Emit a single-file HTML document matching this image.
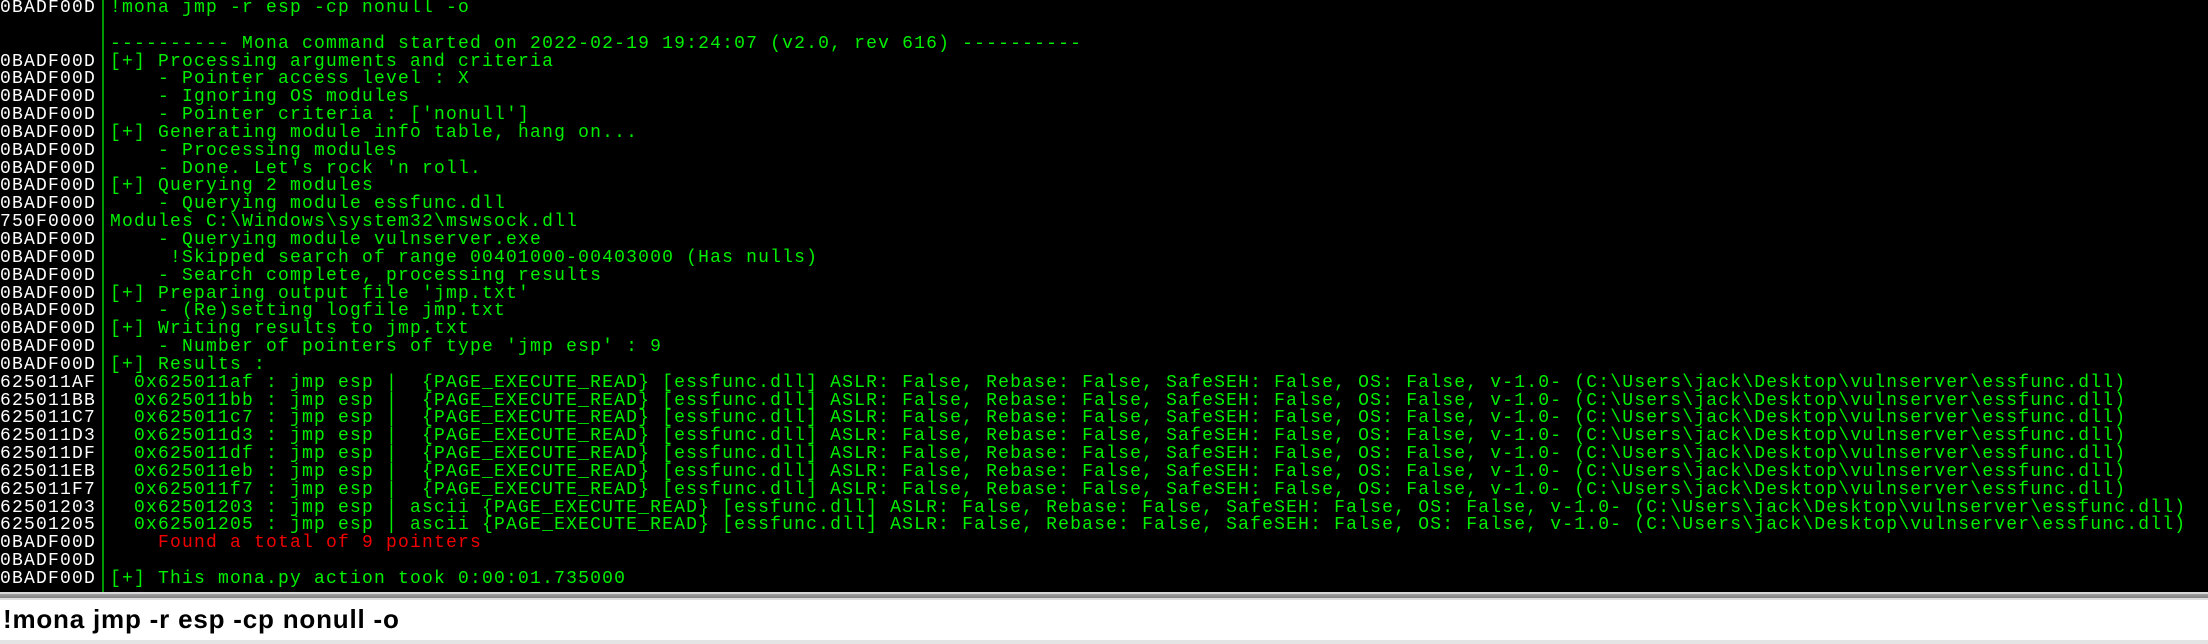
<!DOCTYPE html>
<html><head><meta charset="utf-8"><style>
html,body{margin:0;padding:0;width:2208px;height:644px;overflow:hidden;background:#000}
.log{position:absolute;left:0;top:0;width:2208px;height:592px;background:#000}
.div{position:absolute;left:102px;top:0;width:2px;height:592px;background:#009a00}
pre{margin:0;position:absolute;top:0;font-family:"Liberation Mono",monospace;font-size:18px;letter-spacing:1.2px;line-height:17.85px;white-space:pre}
.addr{left:0;color:#fff}
.txt{left:110px;color:#00f000}
.r{color:#f00000}
.bar{position:absolute;left:0;top:592px;width:2208px;height:8px;background:linear-gradient(#d8d8d8,#d8d8d8 2px,#a0a0a0 2px,#808080 6px,#e0e0e0 6px)}
.inp{position:absolute;left:0;top:600px;width:2208px;height:40px;background:#fff}
.bot{position:absolute;left:0;top:640px;width:2208px;height:4px;background:#e4e4e4}
.inp span{position:absolute;left:3px;top:4px;font-family:"Liberation Sans",sans-serif;font-weight:bold;font-size:26px;letter-spacing:0.8px;color:#000}
</style></head><body>
<div class="log">
<div class="div"></div>
<pre class="addr">0BADF00D


0BADF00D
0BADF00D
0BADF00D
0BADF00D
0BADF00D
0BADF00D
0BADF00D
0BADF00D
0BADF00D
750F0000
0BADF00D
0BADF00D
0BADF00D
0BADF00D
0BADF00D
0BADF00D
0BADF00D
0BADF00D
625011AF
625011BB
625011C7
625011D3
625011DF
625011EB
625011F7
62501203
62501205
0BADF00D
0BADF00D
0BADF00D</pre>
<pre class="txt">!mona jmp -r esp -cp nonull -o

---------- Mona command started on 2022-02-19 19:24:07 (v2.0, rev 616) ----------
[+] Processing arguments and criteria
    - Pointer access level : X
    - Ignoring OS modules
    - Pointer criteria : ['nonull']
[+] Generating module info table, hang on...
    - Processing modules
    - Done. Let's rock 'n roll.
[+] Querying 2 modules
    - Querying module essfunc.dll
Modules C:\Windows\system32\mswsock.dll
    - Querying module vulnserver.exe
     !Skipped search of range 00401000-00403000 (Has nulls)
    - Search complete, processing results
[+] Preparing output file 'jmp.txt'
    - (Re)setting logfile jmp.txt
[+] Writing results to jmp.txt
    - Number of pointers of type 'jmp esp' : 9
[+] Results :
  0x625011af : jmp esp |  {PAGE_EXECUTE_READ} [essfunc.dll] ASLR: False, Rebase: False, SafeSEH: False, OS: False, v-1.0- (C:\Users\jack\Desktop\vulnserver\essfunc.dll)
  0x625011bb : jmp esp |  {PAGE_EXECUTE_READ} [essfunc.dll] ASLR: False, Rebase: False, SafeSEH: False, OS: False, v-1.0- (C:\Users\jack\Desktop\vulnserver\essfunc.dll)
  0x625011c7 : jmp esp |  {PAGE_EXECUTE_READ} [essfunc.dll] ASLR: False, Rebase: False, SafeSEH: False, OS: False, v-1.0- (C:\Users\jack\Desktop\vulnserver\essfunc.dll)
  0x625011d3 : jmp esp |  {PAGE_EXECUTE_READ} [essfunc.dll] ASLR: False, Rebase: False, SafeSEH: False, OS: False, v-1.0- (C:\Users\jack\Desktop\vulnserver\essfunc.dll)
  0x625011df : jmp esp |  {PAGE_EXECUTE_READ} [essfunc.dll] ASLR: False, Rebase: False, SafeSEH: False, OS: False, v-1.0- (C:\Users\jack\Desktop\vulnserver\essfunc.dll)
  0x625011eb : jmp esp |  {PAGE_EXECUTE_READ} [essfunc.dll] ASLR: False, Rebase: False, SafeSEH: False, OS: False, v-1.0- (C:\Users\jack\Desktop\vulnserver\essfunc.dll)
  0x625011f7 : jmp esp |  {PAGE_EXECUTE_READ} [essfunc.dll] ASLR: False, Rebase: False, SafeSEH: False, OS: False, v-1.0- (C:\Users\jack\Desktop\vulnserver\essfunc.dll)
  0x62501203 : jmp esp | ascii {PAGE_EXECUTE_READ} [essfunc.dll] ASLR: False, Rebase: False, SafeSEH: False, OS: False, v-1.0- (C:\Users\jack\Desktop\vulnserver\essfunc.dll)
  0x62501205 : jmp esp | ascii {PAGE_EXECUTE_READ} [essfunc.dll] ASLR: False, Rebase: False, SafeSEH: False, OS: False, v-1.0- (C:\Users\jack\Desktop\vulnserver\essfunc.dll)
<span class="r">    Found a total of 9 pointers</span>

[+] This mona.py action took 0:00:01.735000</pre>
</div>
<div class="bar"></div>
<div class="inp"><span>!mona jmp -r esp -cp nonull -o</span></div>
<div class="bot"></div>
</body></html>
